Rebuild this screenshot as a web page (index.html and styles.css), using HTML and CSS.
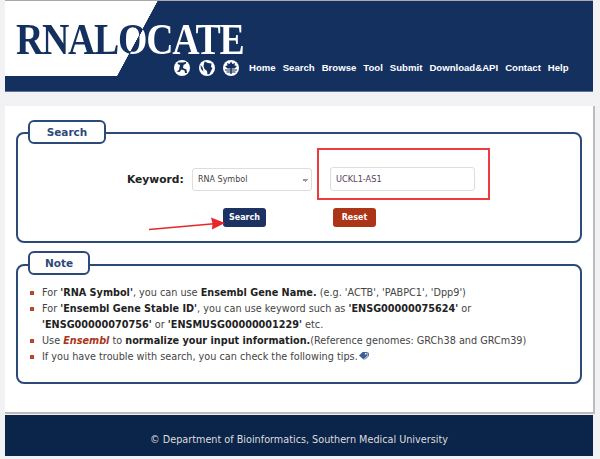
FILE: index.html

```html
<!DOCTYPE html>
<html lang="en">
<head>
    <meta charset="UTF-8">
    <title>RNALocate</title>
    <link rel="stylesheet" href="styles.css">
</head>
<body>
<div class="header">
    <div class="logo">RNALOCATE</div>
    <div class="nav-row">
        <div class="icons">
            <svg class="icon" viewBox="0 0 16 16"><circle cx="8" cy="8" r="8" fill="#fff"/><path d="M4 2.500h4.500l3.500-.5v1.500L9.500 5l-.5 3 3.500 1.500.5 3.500h-2l-.5-2.500-3-1-2 2.500-3-.5 2.500-1.500L6 5 3.500 4z" fill="#14305f"/></svg>
            <svg class="icon" viewBox="0 0 16 16"><circle cx="8" cy="8" r="8" fill="#fff"/><path d="M5.500 1.500L9 3l3.500.5-.5 3.500 1.500 1-1.500 3-1.500 3-2 .5-.5-3.500-2.500-2-1-3zM1.500 5l2 2.500 1 4-2.500-2.500z" fill="#14305f"/></svg>
            <svg class="icon" viewBox="0 0 16 16"><circle cx="8" cy="8" r="8" fill="#fff"/><path d="M8 1.500l1.500 2.500L12 3l-.5 2.500 2.500.5-2.500 2.500h-7L2 6l2.500-.5L4 3l2.500 1zM2 9.500h12v1H2zM3.500 11.500h9v1h-9zM7.300 8h1.400v6H7.300z" fill="#14305f"/></svg>
        </div>
        <ul class="nav">
            <li><a href="#">Home</a></li>
            <li><a href="#">Search</a></li>
            <li><a href="#">Browse</a></li>
            <li><a href="#">Tool</a></li>
            <li><a href="#">Submit</a></li>
            <li><a href="#">Download&amp;API</a></li>
            <li><a href="#">Contact</a></li>
            <li><a href="#">Help</a></li>
        </ul>
    </div>
</div>

<div class="content">
    <fieldset class="panel search-panel">
        <legend class="search-legend">Search</legend>
        <div class="form-row">
            <label class="keyword" for="type">Keyword:</label>
            <select id="type" class="field type-select">
                <option>RNA Symbol</option>
            </select>
            <input class="field keyword-input" type="text" value="UCKL1-AS1">
        </div>
        <div class="button-row">
            <button class="btn btn-search">Search</button>
            <button class="btn btn-reset">Reset</button>
        </div>
    </fieldset>

    <fieldset class="panel note-panel">
        <legend class="note-legend">Note</legend>
        <ul class="notes">
            <li>For <b>'RNA Symbol'</b>, you can use <b>Ensembl Gene Name.</b> (e.g. 'ACTB', 'PABPC1', 'Dpp9')</li>
            <li>For <b>'Ensembl Gene Stable ID'</b>, you can use keyword such as <b>'ENSG00000075624'</b> or<br><b>'ENSG00000070756'</b> or <b>'ENSMUSG00000001229'</b> etc.</li>
            <li>Use <a class="ensembl" href="#">Ensembl</a> to <b>normalize your input information.</b>(Reference genomes: GRCh38 and GRCm39)</li>
            <li>If you have trouble with search, you can check the following tips.<svg class="tag" viewBox="0 0 12 10"><path d="M1 5l4-4h5.500v4l-4.500 4.500z" fill="#3d5f92"/><path d="M11.500 2v3.500L7.500 9.500" fill="none" stroke="#3d5f92"/><circle cx="8.500" cy="3" r="1" fill="#fff"/></svg></li>
        </ul>
    </fieldset>

    <!-- red marks drawn over the screenshot -->
    <div class="mark-box"></div>
    <svg class="mark-arrow" viewBox="0 0 78 16"><path d="M1 14.500L66 8.800" stroke="#e8262a" stroke-width="1.500"/><path d="M77 8L63 2.500l1.500 6-0.500 6z" fill="#e8262a"/></svg>
</div>

<div class="footer">© Department of Bioinformatics, Southern Medical University</div>
</body>
</html>
```

FILE: styles.css

```css
html, body {
    height: 459px;
    overflow: hidden;
}
body {
    margin: 0;
    background: #f2f1f3;
    font-family: "DejaVu Sans", sans-serif;
    color: #333;
}
.header {
    box-sizing: border-box;
    width: 588px;
    height: 92px;
    margin-left: 5px;
    padding: 17px 0 0 11px;
    border-top: 1px solid #aaa;
    border-bottom: 1px solid #5c7299;
    background-color: #14305f;
    background-image: linear-gradient(118.4deg, #fff 134px, #14305f 134.500px);
    background-size: 100% 75px;
    background-repeat: no-repeat;
}
.logo {
    width: 270px;
    height: 44px;
    font-family: "Liberation Serif", serif;
    font-size: 44px;
    font-weight: bold;
    line-height: 44px;
    letter-spacing: -1.500px;
    white-space: nowrap;
    transform: scaleX(0.86);
    transform-origin: left;
    background-image: linear-gradient(122deg, #14305f 131px, #fff 131.500px);
    -webkit-background-clip: text;
    background-clip: text;
    color: transparent;
}
.nav-row {
    display: flex;
    align-items: center;
    margin: -2px 0 0 158px;
}
.icons {
    display: flex;
    gap: 8.500px;
}
.icon {
    display: block;
    width: 16px;
    height: 16px;
}
.nav {
    display: flex;
    gap: 7px;
    margin: -1px 0 0 10px;
    padding: 0;
    list-style: none;
    font-family: "Liberation Sans", sans-serif;
    font-size: 9.600px;
    font-weight: bold;
}
.nav a {
    color: #fff;
    text-decoration: none;
}
.content {
    position: relative;
    box-sizing: border-box;
    width: 590px;
    height: 308px;
    margin: 14px 0 0 5px;
    padding: 15px 11px 0;
    background: #fff;
    border-right: 2px solid #bbb;
    border-bottom: 2px solid #bbb;
}
.panel {
    box-sizing: border-box;
    margin: 0;
    padding: 0;
    border: 2px solid #2c4a78;
    border-radius: 8px;
}
.panel legend {
    position: relative;
    display: flex;
    justify-content: center;
    box-sizing: border-box;
    margin: 0 0 0 10px;
    padding: 0;
    height: 24px;
    line-height: 21px;
    font-size: 10.500px;
    font-weight: bold;
    color: #2c4a78;
    border: 2px solid #2c4a78;
    border-radius: 6px;
    background: #fff;
}
.search-legend {
    width: 78px;
    top: -1px;
}
.note-legend {
    width: 62px;
    top: -2px;
}
.search-panel {
    height: 122px;
}
.note-panel {
    height: 131px;
    margin-top: 10px;
}
.form-row {
    display: flex;
    align-items: center;
    margin: 22px 0 0 109px;
}
.keyword {
    width: 58px;
    font-size: 10.700px;
    font-weight: bold;
    color: #222;
}
.field {
    box-sizing: border-box;
    height: 23px;
    padding: 0 5px;
    font-family: "DejaVu Sans", sans-serif;
    font-size: 8px;
    color: #444;
    background-color: #fff;
    border: 1px solid #ddd;
    border-radius: 3px;
}
.type-select {
    width: 120px;
    margin-left: 7px;
    appearance: none;
    background-image: linear-gradient(45deg, transparent 50%, #999 50%), linear-gradient(-45deg, transparent 50%, #999 50%);
    background-size: 3px 3px;
    background-position: 109px 10px, 112px 10px;
    background-repeat: no-repeat;
}
.keyword-input {
    width: 145px;
    height: 24px;
    margin-left: 18px;
    font-size: 8.200px;
    color: #5a4060;
}
.button-row {
    display: flex;
    margin: 17px 0 0 205px;
}
.btn {
    height: 19px;
    padding: 0;
    font-family: "DejaVu Sans", sans-serif;
    font-size: 8px;
    font-weight: bold;
    color: #fff;
    border: none;
    border-radius: 3px;
}
.btn-search {
    width: 43px;
    background: #1b3263;
}
.btn-reset {
    width: 43px;
    margin-left: 67px;
    background: #ac3518;
}
.notes {
    margin: 8px 0 0 24px;
    padding: 0;
    list-style: none;
    font-size: 9.700px;
    line-height: 16px;
    color: #444;
}
.notes li {
    position: relative;
}
.notes li::before {
    content: "";
    position: absolute;
    left: -12px;
    top: 6px;
    width: 3.500px;
    height: 3.500px;
    background: #b5472f;
}
.notes b {
    color: #222;
}
.ensembl {
    font-style: italic;
    font-weight: bold;
    color: #a93519;
    text-decoration: none;
}
.tag {
    width: 11px;
    height: 9px;
    margin-left: 0;
}
.mark-box {
    position: absolute;
    left: 312px;
    top: 42px;
    width: 173px;
    height: 52px;
    box-sizing: border-box;
    border: 2px solid #ef3b40;
}
.mark-arrow {
    position: absolute;
    left: 143px;
    top: 109px;
    width: 78px;
    height: 16px;
}
.footer {
    box-sizing: border-box;
    width: 588px;
    height: 41px;
    margin: 1px 0 0 5px;
    padding-top: 19px;
    text-align: center;
    font-size: 9.660px;
    color: #ddd;
    background: #0b2449;
}
```
